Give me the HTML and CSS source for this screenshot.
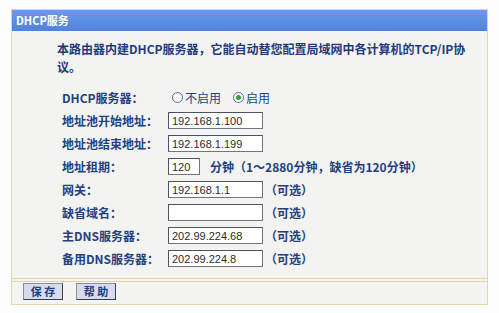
FILE: index.html
```html
<!DOCTYPE html>
<html lang="zh-CN">

<head>
  <meta charset="UTF-8">
  <title>DHCP服务</title>
  <link rel="stylesheet" href="styles.css">
</head>

<body>
  <div class="panel">
    <div class="title">DHCP服务</div>
    <div class="content">
      <p class="intro">本路由器内建DHCP服务器，它能自动替您配置局域网中各计算机的TCP/IP协议。</p>
      <div class="form">
        <label>DHCP服务器：</label>
        <div class="field">
          <span class="radio"></span><span class="opt">不启用</span>
          <span class="radio on"></span><span class="opt">启用</span>
        </div>
        <label>地址池开始地址：</label>
        <div class="field"><input type="text" value="192.168.1.100"></div>
        <label>地址池结束地址：</label>
        <div class="field"><input type="text" value="192.168.1.199"></div>
        <label>地址租期：</label>
        <div class="field"><input type="text" class="short" value="120"><span class="note lease">分钟（1～2880分钟，缺省为120分钟）</span></div>
        <label>网关：</label>
        <div class="field"><input type="text" value="192.168.1.1"><span class="note">（可选）</span></div>
        <label>缺省域名：</label>
        <div class="field"><input type="text" value=""><span class="note">（可选）</span></div>
        <label>主DNS服务器：</label>
        <div class="field"><input type="text" value="202.99.224.68"><span class="note">（可选）</span></div>
        <label>备用DNS服务器：</label>
        <div class="field"><input type="text" value="202.99.224.8"><span class="note">（可选）</span></div>
      </div>
    </div>
    <div class="bottom">
      <button>保 存</button>
      <button>帮 助</button>
    </div>
  </div>
</body>

</html>
```

FILE: styles.css
```css
*{
    margin: 0;
    padding: 0;
    box-sizing: border-box;
  }
  body{
    background-color: #fdfdfd;
    font-family: "Noto Sans CJK SC", "Liberation Sans", sans-serif;
    font-size: 12px;
    color: #23417f;
  }
  .panel{
    width: 477px;
    margin: 9px 0 0 11px;
    border: 1px solid #e5d5aa;
    background-color: #f3f3f2;
  }
  .title{
    height: 21px;
    line-height: 21px;
    padding-left: 4px;
    background: linear-gradient(#6d9ae6, #4f83dc);
    color: #fff;
    font-size: 11px;
    font-weight: bold;
  }
  .content{
    padding: 9px 16px 8px 45px;
    border-bottom: 1px solid #e5d5aa;
  }
  .intro{
    line-height: 18px;
    font-weight: bold;
    color: #1f3c7a;
  }
  .form{
    display: grid;
    grid-template-columns: 106px auto;
    grid-auto-rows: 23px;
    margin: 10px 0 0 5px;
  }
  .form label{
    display: flex;
    align-items: center;
    font-weight: bold;
  }
  .field{
    display: flex;
    align-items: center;
  }
  .field input{
    width: 95px;
    height: 17px;
    border: 1px solid #6e7684;
    border-top-color: #4d5460;
    border-left-color: #4d5460;
    background-color: #fff;
    padding-left: 3px;
    font-family: "Liberation Sans", sans-serif;
    font-size: 11px;
    color: #2b2b2b;
  }
  .field input.short{
    width: 32px;
  }
  .radio{
    width: 11px;
    height: 11px;
    margin: 0 2px 0 4px;
    border: 1px solid #506d9a;
    border-radius: 50%;
    background-color: #fff;
    display: flex;
    align-items: center;
    justify-content: center;
  }
  .radio.on::after{
    content: "";
    width: 5px;
    height: 5px;
    border-radius: 50%;
    background-color: #3f9a3a;
  }
  .opt{
    margin-right: 8px;
  }
  .note{
    margin-left: 2px;
    font-weight: bold;
  }
  .note.lease{
    margin-left: 10px;
  }
  .bottom{
    margin-top: 2px;
    border-top: 1px solid #e5d5aa;
    height: 23px;
    padding: 1px 0 0 11px;
    display: flex;
    gap: 13px;
    background-color: #f4f4f3;
  }
  .bottom button{
    width: 40px;
    height: 17px;
    border: 1px solid #3a3f4a;
    border-top-color: #8a8f9a;
    border-left-color: #8a8f9a;
    background-color: #d6dcee;
    font-family: "Noto Sans CJK SC", sans-serif;
    font-size: 11px;
    font-weight: bold;
    color: #23417f;
    line-height: 15px;
  }
```
